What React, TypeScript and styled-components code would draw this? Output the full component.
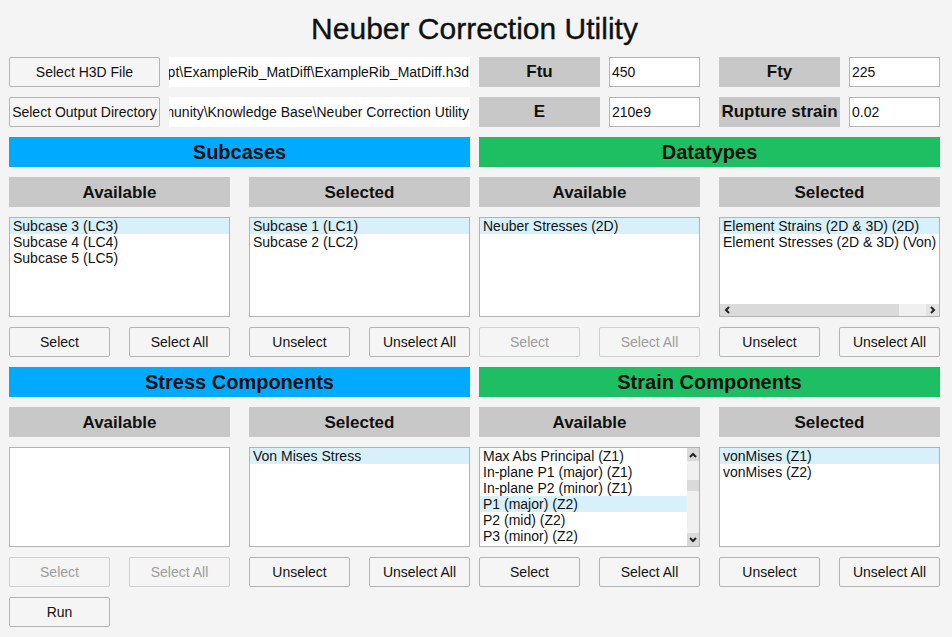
import React from 'react';
import styled, { createGlobalStyle } from 'styled-components';

const GlobalStyle = createGlobalStyle`
    html, body {
        margin: 0;
        background: #f4f4f4;
    }
    body {
        font-family: "Liberation Sans", Arial, sans-serif;
        color: #111;
    }
`;

interface ColumnData {
    title: string,
    items: string[],
    selected?: number,
    buttons: [string, string],
    disabled?: boolean,
    scroll?: 'h' | 'v',
}

interface PanelData {
    title: string,
    color: string,
    columns: [ColumnData, ColumnData],
}

const BLUE = '#00aaff';
const GREEN = '#1dbf62';

const panels: PanelData[] = [
    {
        title: 'Subcases',
        color: BLUE,
        columns: [
            { title: 'Available', items: ['Subcase 3 (LC3)', 'Subcase 4 (LC4)', 'Subcase 5 (LC5)'], selected: 0, buttons: ['Select', 'Select All'] },
            { title: 'Selected', items: ['Subcase 1 (LC1)', 'Subcase 2 (LC2)'], selected: 0, buttons: ['Unselect', 'Unselect All'] },
        ],
    },
    {
        title: 'Datatypes',
        color: GREEN,
        columns: [
            { title: 'Available', items: ['Neuber Stresses (2D)'], selected: 0, buttons: ['Select', 'Select All'], disabled: true },
            {
                title: 'Selected',
                items: ['Element Strains (2D & 3D) (2D)', 'Element Stresses (2D & 3D) (Von)'],
                selected: 0,
                buttons: ['Unselect', 'Unselect All'],
                scroll: 'h',
            },
        ],
    },
    {
        title: 'Stress Components',
        color: BLUE,
        columns: [
            { title: 'Available', items: [], buttons: ['Select', 'Select All'], disabled: true },
            { title: 'Selected', items: ['Von Mises Stress'], selected: 0, buttons: ['Unselect', 'Unselect All'] },
        ],
    },
    {
        title: 'Strain Components',
        color: GREEN,
        columns: [
            {
                title: 'Available',
                items: [
                    'Max Abs Principal (Z1)',
                    'In-plane P1 (major) (Z1)',
                    'In-plane P2 (minor) (Z1)',
                    'P1 (major) (Z2)',
                    'P2 (mid) (Z2)',
                    'P3 (minor) (Z2)',
                ],
                selected: 3,
                buttons: ['Select', 'Select All'],
                scroll: 'v',
            },
            { title: 'Selected', items: ['vonMises (Z1)', 'vonMises (Z2)'], selected: 0, buttons: ['Unselect', 'Unselect All'] },
        ],
    },
];

const Chevron = ({ dir }: { dir: 'up' | 'down' | 'left' | 'right' }) => {
    const rot = { up: 0, right: 90, down: 180, left: 270 }[dir];
    return (
        <svg width="8" height="8" viewBox="0 0 8 8" style={{ transform: `rotate(${rot}deg)` }}>
            <polyline points="1,6 4,3 7,6" fill="none" stroke="#222" strokeWidth="2" />
        </svg>
    );
};

const ListColumn = ({ col }: { col: ColumnData }) => (
    <Column>
        <SubHeader>{col.title}</SubHeader>
        <ListBox $scroll={col.scroll}>
            <Items>
                {col.items.map((item, i) => (
                    <Item key={item} $selected={i === col.selected}>{item}</Item>
                ))}
            </Items>
            {col.scroll === 'h' && (
                <HScroll>
                    <Arrow><Chevron dir="left" /></Arrow>
                    <HThumb />
                    <Arrow $light><Chevron dir="right" /></Arrow>
                </HScroll>
            )}
            {col.scroll === 'v' && (
                <VScroll>
                    <Arrow><Chevron dir="up" /></Arrow>
                    <VThumb />
                    <Arrow><Chevron dir="down" /></Arrow>
                </VScroll>
            )}
        </ListBox>
        <ButtonRow>
            <Button disabled={col.disabled}>{col.buttons[0]}</Button>
            <Button disabled={col.disabled}>{col.buttons[1]}</Button>
        </ButtonRow>
    </Column>
);

export default function App() {
    return (
        <Page>
            <GlobalStyle />
            <Title>Neuber Correction Utility</Title>
            <Halves>
                <FileRow>
                    <Button>Select H3D File</Button>
                    <PathField><span>ipt\ExampleRib_MatDiff\ExampleRib_MatDiff.h3d</span></PathField>
                </FileRow>
                <Quad>
                    <Pair>
                        <FieldLabel>Ftu</FieldLabel>
                        <ValueInput readOnly value="450" />
                    </Pair>
                    <Pair>
                        <FieldLabel>Fty</FieldLabel>
                        <ValueInput readOnly value="225" />
                    </Pair>
                </Quad>
                <FileRow>
                    <Button>Select Output Directory</Button>
                    <PathField><span>munity\Knowledge Base\Neuber Correction Utility</span></PathField>
                </FileRow>
                <Quad>
                    <Pair>
                        <FieldLabel>E</FieldLabel>
                        <ValueInput readOnly value="210e9" />
                    </Pair>
                    <Pair>
                        <FieldLabel>Rupture strain</FieldLabel>
                        <ValueInput readOnly value="0.02" />
                    </Pair>
                </Quad>
                {panels.map((p) => (
                    <Panel key={p.title}>
                        <SectionHeader $color={p.color}>{p.title}</SectionHeader>
                        <Quad>
                            <ListColumn col={p.columns[0]} />
                            <ListColumn col={p.columns[1]} />
                        </Quad>
                    </Panel>
                ))}
            </Halves>
            <RunRow>
                <Button>Run</Button>
            </RunRow>
        </Page>
    );
}

const Page = styled.div`
    width: 931px;
    padding: 0 0 0 9px;
    display: flex;
    flex-direction: column;
`;

const Title = styled.div`
    height: 47px;
    display: flex;
    align-items: center;
    justify-content: center;
    padding-top: 10px;
    box-sizing: border-box;
    font-size: 30px;
    -webkit-text-stroke: 0.35px #111;
    color: #111;
`;

const Halves = styled.div`
    margin-top: 10px;
    display: grid;
    grid-template-columns: 461px 461px;
    column-gap: 9px;
    row-gap: 10px;
`;

const FileRow = styled.div`
    display: grid;
    grid-template-columns: 151px 1fr;
    column-gap: 9px;
    height: 30px;
`;

const PathField = styled.div`
    background: #fff;
    display: flex;
    align-items: center;
    justify-content: flex-end;
    overflow: hidden;
    white-space: nowrap;
    font-size: 14px;
    padding-right: 1px;
`;

const Quad = styled.div`
    display: grid;
    grid-template-columns: 221px 221px;
    column-gap: 19px;
`;

const Pair = styled.div`
    display: grid;
    grid-template-columns: 121px 1fr;
    column-gap: 9px;
    height: 30px;
`;

const FieldLabel = styled.div`
    background: #c8c8c8;
    display: flex;
    align-items: center;
    justify-content: center;
    font-size: 17px;
    font-weight: bold;
    white-space: nowrap;
`;

const ValueInput = styled.input`
    box-sizing: border-box;
    width: 100%;
    height: 30px;
    margin: 0;
    border: 1px solid #b4b4b4;
    background: #fff;
    padding: 0 2px;
    font-family: "Liberation Sans", Arial, sans-serif;
    font-size: 14px;
    color: #111;
    outline: none;
`;

const Panel = styled.div`
    display: flex;
    flex-direction: column;
    gap: 10px;
`;

const SectionHeader = styled.div<{ $color: string }>`
    background: ${(p) => p.$color};
    height: 30px;
    display: flex;
    align-items: center;
    justify-content: center;
    font-size: 20px;
    font-weight: bold;
    color: #111;
`;

const Column = styled.div`
    display: flex;
    flex-direction: column;
    gap: 10px;
`;

const SubHeader = styled.div`
    background: #c8c8c8;
    height: 30px;
    display: flex;
    align-items: center;
    justify-content: center;
    padding-top: 1px;
    box-sizing: border-box;
    font-size: 17px;
    font-weight: bold;
`;

const ListBox = styled.div<{ $scroll?: 'h' | 'v' }>`
    box-sizing: border-box;
    height: 100px;
    border: 1px solid #b4b4b4;
    background: #fff;
    display: flex;
    flex-direction: ${(p) => (p.$scroll === 'v' ? 'row' : 'column')};
    overflow: hidden;
`;

const Items = styled.div`
    flex: 1;
    min-width: 0;
    min-height: 0;
    overflow: hidden;
`;

const Item = styled.div<{ $selected?: boolean }>`
    height: 16px;
    line-height: 16px;
    padding-left: 3px;
    font-size: 14px;
    white-space: nowrap;
    background: ${(p) => (p.$selected ? '#d8f0fa' : 'transparent')};
`;

const HScroll = styled.div`
    height: 12px;
    display: flex;
    background: #f0f0f0;
`;

const VScroll = styled.div`
    width: 12px;
    display: flex;
    flex-direction: column;
    background: #f0f0f0;
`;

const Arrow = styled.div<{ $light?: boolean }>`
    flex: 0 0 13px;
    background: ${(p) => (p.$light ? '#e4e4e4' : '#dadada')};
    display: flex;
    align-items: center;
    justify-content: center;
`;

const HThumb = styled.div`
    width: 166px;
    background: #dadada;
    margin-right: auto;
`;

const VThumb = styled.div`
    height: 11px;
    margin-top: 19px;
    margin-bottom: auto;
    background: #dadada;
`;

const ButtonRow = styled.div`
    display: flex;
    justify-content: space-between;
`;

const Button = styled.button`
    box-sizing: border-box;
    height: 30px;
    min-width: 101px;
    margin: 0;
    padding: 0 2px;
    border: 1px solid #b4b4b4;
    border-radius: 2px;
    background: #f5f5f5;
    font-family: "Liberation Sans", Arial, sans-serif;
    font-size: 14px;
    color: #111;
    white-space: nowrap;

    &:disabled {
        color: #9c9c9c;
        border-color: #cfcfcf;
    }
`;

const RunRow = styled.div`
    margin-top: 10px;
    display: flex;
`;
